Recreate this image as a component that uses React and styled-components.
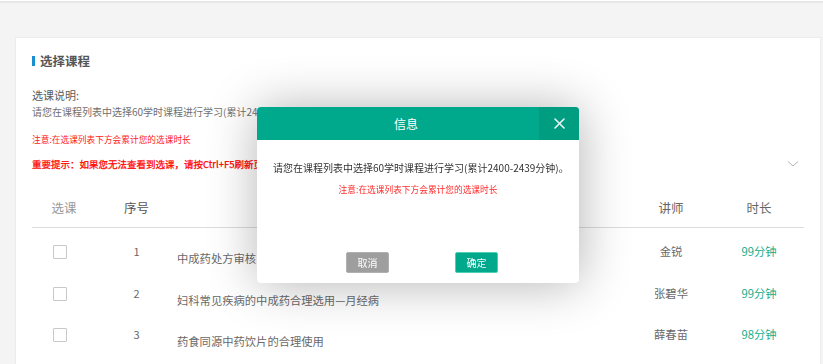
import React from "react";
import styled, { createGlobalStyle } from "styled-components";

const GlobalStyle = createGlobalStyle`
  html, body { margin: 0; padding: 0; }
  body {
    background: #f4f4f4;
    font-family: "Noto Sans CJK SC", "Noto Sans", sans-serif;
    color: #666;
    overflow: hidden;
  }
  * { box-sizing: border-box; }
`;

const TopBar = styled.div`
  height: 2px;
  background: #fff;
  border-bottom: 1px solid #e4e4e4;
  box-shadow: 0 1px 2px rgba(0, 0, 0, 0.06);
`;

const Main = styled.div`
  padding: 35px 2px 0 15px;
`;

const Card = styled.div`
  background: #fff;
  border: 1px solid #ececec;
  border-bottom: none;
  height: 330px;
  padding: 0 16px 0 16px;
`;

const Title = styled.h2`
  margin: 13px 0 0;
  display: flex;
  align-items: center;
  gap: 5px;
  font-size: 12.5px;
  line-height: 20px;
  font-weight: bold;
  color: #555;
  &::before {
    content: "";
    display: block;
    width: 3px;
    height: 10px;
    background: #1a8fd0;
  }
`;

const Line = styled.div`
  margin-top: ${(p) => p.$mt}px;
  font-size: ${(p) => p.$size}px;
  line-height: 16px;
  height: 16px;
  color: ${(p) => p.$color};
  white-space: nowrap;
`;

const NoticeRow = styled.div`
  display: flex;
  align-items: center;
  justify-content: space-between;
  margin-top: 8px;
  height: 16px;
  padding-right: 5px;
`;

const Strong = styled.span`
  font-size: 9.5px;
  line-height: 16px;
  color: #ff0000;
  font-weight: normal;
  -webkit-text-stroke: 0.25px #ff0000;
  white-space: nowrap;
`;

const Table = styled.div`
  margin-top: 15px;
  width: 772px;
`;

const Grid = styled.div`
  display: grid;
  grid-template-columns: 64px 81px 1fr 86px 90px;
`;

const HeadRow = styled(Grid)`
  height: 41px;
  align-items: center;
  border-bottom: 1px solid #dcdcdc;
`;

const HeadCell = styled.div`
  font-size: 12.5px;
  color: ${(p) => p.$color || "#666"};
  text-align: center;
`;

const Row = styled(Grid)`
  height: ${(p) => p.$h}px;
  align-items: start;
`;

const Cell = styled.div`
  margin-top: ${(p) => p.$mt}px;
  font-size: ${(p) => p.$size || 11.3}px;
  line-height: 16px;
  color: ${(p) => p.$color || "#6a6a6a"};
  text-align: ${(p) => p.$align || "center"};
  white-space: nowrap;
`;

const Checkbox = styled.span`
  display: block;
  margin: 17px 0 0 21px;
  width: 14px;
  height: 14px;
  border: 1px solid #c8c8c8;
  border-radius: 1px;
  background: #fff;
`;

const Dialog = styled.div`
  position: fixed;
  left: 257px;
  top: 107px;
  width: 322px;
  height: 176px;
  background: #fff;
  border-radius: 4px;
  box-shadow: 1px 1px 50px rgba(0, 0, 0, 0.3);
  display: flex;
  flex-direction: column;
  overflow: hidden;
`;

const DialogHead = styled.div`
  display: flex;
  height: 33px;
  background: #00a98b;
`;

const DialogTitle = styled.div`
  flex: 1;
  padding-left: 16px;
  text-align: center;
  font-size: 12px;
  line-height: 33px;
  color: #fff;
`;

const Close = styled.button`
  width: 40px;
  height: 33px;
  border: none;
  padding: 0;
  background: #009d81;
  display: flex;
  align-items: center;
  justify-content: center;
  cursor: pointer;
`;

const DialogBody = styled.div`
  flex: 1;
  padding: 20px 16px 0;
`;

const DialogText = styled.div`
  font-size: 10px;
  line-height: 16px;
  color: #333;
  white-space: nowrap;
`;

const DialogNote = styled.div`
  margin-top: 6px;
  font-size: 8.7px;
  line-height: 16px;
  color: #ff2a2a;
  text-align: center;
`;

const Buttons = styled.div`
  display: flex;
  justify-content: center;
  gap: 66px;
  padding: 0 0 10px 8px;
`;

const Btn = styled.button`
  width: 43px;
  height: 21px;
  padding: 0;
  border-radius: 2px;
  font-family: inherit;
  font-size: 10px;
  color: #fff;
  background: ${(p) => (p.$primary ? "#00a98b" : "#9e9e9e")};
  border: 1px solid ${(p) => (p.$primary ? "#4fcfb6" : "#b0b0b0")};
  cursor: pointer;
`;

const courses = [
  { no: 1, name: "中成药处方审核", teacher: "金锐", time: "99分钟", h: 42 },
  { no: 2, name: "妇科常见疾病的中成药合理选用—月经病", teacher: "张碧华", time: "99分钟", h: 41 },
  { no: 3, name: "药食同源中药饮片的合理使用", teacher: "薛春苗", time: "98分钟", h: 42 },
];

export default function App() {
  return (
    <>
      <GlobalStyle />
      <TopBar />
      <Main>
        <Card>
          <Title>选择课程</Title>
          <Line $mt={16} $size={11} $color="#5a5a5a">选课说明:</Line>
          <Line $mt={1} $size={10} $color="#707070">
            请您在课程列表中选择60学时课程进行学习(累计2400-2439分钟)。
          </Line>
          <Line $mt={12} $size={8.7} $color="#ff1a1a">注意:在选课列表下方会累计您的选课时长</Line>
          <NoticeRow>
            <Strong>重要提示：如果您无法查看到选课，请按Ctrl+F5刷新页面后重试。</Strong>
            <svg width="12" height="8" viewBox="0 0 12 8">
              <path d="M1 1.5 L6 6 L11 1.5" fill="none" stroke="#b5b5b5" strokeWidth="1" />
            </svg>
          </NoticeRow>
          <Table>
            <HeadRow>
              <HeadCell $color="#999">选课</HeadCell>
              <HeadCell $color="#555">序号</HeadCell>
              <HeadCell $color="#555">课程名称</HeadCell>
              <HeadCell>讲师</HeadCell>
              <HeadCell>时长</HeadCell>
            </HeadRow>
            {courses.map((c) => (
              <Row key={c.no} $h={c.h}>
                <div>
                  <Checkbox />
                </div>
                <Cell $mt={15} $size={11}>{c.no}</Cell>
                <Cell $mt={22} $align="left">{c.name}</Cell>
                <Cell $mt={15}>{c.teacher}</Cell>
                <Cell $mt={15} $size={11.3} $color="#19ad8c">{c.time}</Cell>
              </Row>
            ))}
          </Table>
        </Card>
      </Main>
      <Dialog>
        <DialogHead>
          <DialogTitle>信息</DialogTitle>
          <Close aria-label="关闭">
            <svg width="11" height="11" viewBox="0 0 11 11">
              <path d="M1 1 L10 10 M10 1 L1 10" stroke="#e8f7f3" strokeWidth="1.6" strokeLinecap="round" />
            </svg>
          </Close>
        </DialogHead>
        <DialogBody>
          <DialogText>请您在课程列表中选择60学时课程进行学习(累计2400-2439分钟)。</DialogText>
          <DialogNote>注意:在选课列表下方会累计您的选课时长</DialogNote>
        </DialogBody>
        <Buttons>
          <Btn>取消</Btn>
          <Btn $primary>确定</Btn>
        </Buttons>
      </Dialog>
    </>
  );
}
